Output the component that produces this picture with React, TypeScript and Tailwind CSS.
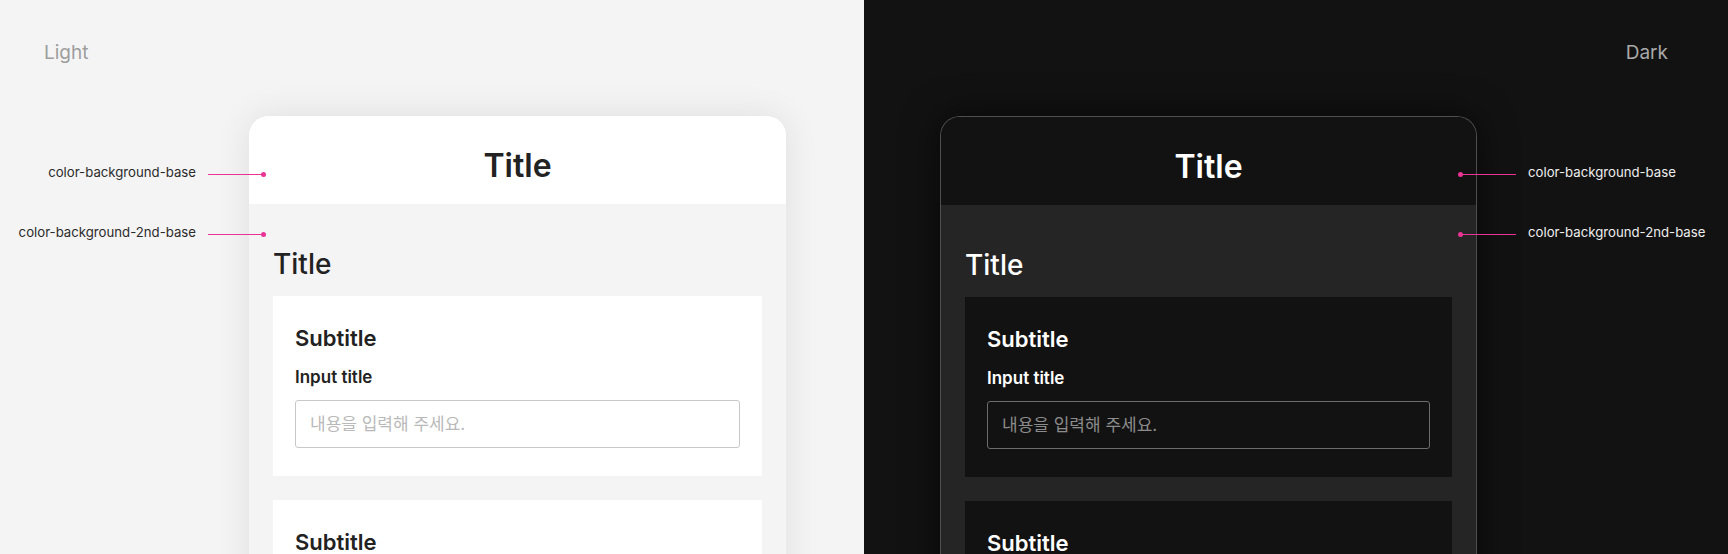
import React from 'react';

type Mode = 'light' | 'dark';

function Annotation({ label, side, mode, top }: { label: string; side: 'left' | 'right'; mode: Mode; top: string }) {
  const textColor = mode === 'light' ? 'text-[#2b2b2b]' : 'text-[#ededed]';
  const line = <div className="h-px w-[53px] bg-[#ea3394]" />;
  const dot = <div className="h-[5px] w-[5px] shrink-0 rounded-full bg-[#ea3394]" />;
  const text = <span className={`mb-[4px] whitespace-nowrap text-[13.2px] leading-4 ${textColor}`}>{label}</span>;

  if (side === 'left') {
    return (
      <div className={`absolute left-0 flex h-4 w-[266px] items-center justify-end ${top}`}>
        <span className="mr-[12px] flex">{text}</span>
        {line}
        {dot}
      </div>
    );
  }
  return (
    <div className={`absolute left-[594px] flex h-4 items-center ${top}`}>
      {dot}
      {line}
      <span className="ml-[12px] flex">{text}</span>
    </div>
  );
}

function Section({ mode }: { mode: Mode }) {
  const light = mode === 'light';
  return (
    <div className={`px-[22px] pb-[28px] pt-[27px] ${light ? 'bg-white' : 'bg-[#131213]'}`}>
      <h3 className={`text-[22px] font-semibold leading-[30px] ${light ? 'text-[#222]' : 'text-white'}`}>Subtitle</h3>
      <p className={`mt-[12px] text-[17px] font-semibold leading-6 ${light ? 'text-[#222]' : 'text-white'}`}>Input title</p>
      <input
        readOnly
        placeholder="내용을 입력해 주세요."
        className={`mt-[11px] block h-12 w-full rounded-[3px] border px-[14px] text-[17px] outline-none ${
          light
            ? 'border-[#c8c8c8] bg-white placeholder:text-[#b9b9b9]'
            : 'border-[#6c6c6c] bg-[#131213] placeholder:text-[#8c8c8c]'
        }`}
      />
    </div>
  );
}

function Card({ mode }: { mode: Mode }) {
  const light = mode === 'light';
  return (
    <div
      className={`w-[537px] overflow-hidden rounded-t-[20px] ${
        light
          ? 'bg-white shadow-[0_0_36px_rgba(0,0,0,0.09)]'
          : 'border border-b-0 border-[#4f4f4f] bg-[#131213] shadow-[0_0_36px_rgba(0,0,0,0.6)]'
      }`}
    >
      {/* header: color-background-base */}
      <div className={`flex h-[88px] justify-center pt-[30px] ${light ? 'bg-white' : 'bg-[#131213]'}`}>
        <h1 className={`text-[32px] font-semibold leading-10 ${light ? 'text-[#222]' : 'text-white'}`}>Title</h1>
      </div>
      {/* body: color-background-2nd-base */}
      <div className={`flex flex-col gap-6 px-6 pb-10 pt-[44px] ${light ? 'bg-[#f4f4f4]' : 'bg-[#252525]'}`}>
        <h2 className={`-mb-[8px] text-[28px] font-medium leading-8 ${light ? 'text-[#222]' : 'text-white'}`}>Title</h2>
        <Section mode={mode} />
        <Section mode={mode} />
      </div>
    </div>
  );
}

function Panel({ mode }: { mode: Mode }) {
  const light = mode === 'light';
  return (
    <div className={`relative h-[554px] w-[864px] overflow-hidden ${light ? 'bg-[#f4f4f4]' : 'bg-[#131213]'}`}>
      <div
        className={`pt-[42px] text-[19px] leading-[22px] ${
          light ? 'pl-[44px] text-[#9d9d9d]' : 'pr-[60px] text-right text-[#a9a9a9]'
        }`}
      >
        {light ? 'Light' : 'Dark'}
      </div>
      <div className={`mt-[52px] flex ${light ? 'pl-[249px]' : 'pl-[76px]'}`}>
        <Card mode={mode} />
      </div>
      <Annotation label="color-background-base" side={light ? 'left' : 'right'} mode={mode} top="top-[166px]" />
      <Annotation label="color-background-2nd-base" side={light ? 'left' : 'right'} mode={mode} top="top-[226px]" />
    </div>
  );
}

export default function App() {
  return (
    <div className="flex h-[554px] w-[1728px] overflow-hidden font-['Inter','Noto_Sans_CJK_KR',sans-serif]">
      <Panel mode="light" />
      <Panel mode="dark" />
    </div>
  );
}
